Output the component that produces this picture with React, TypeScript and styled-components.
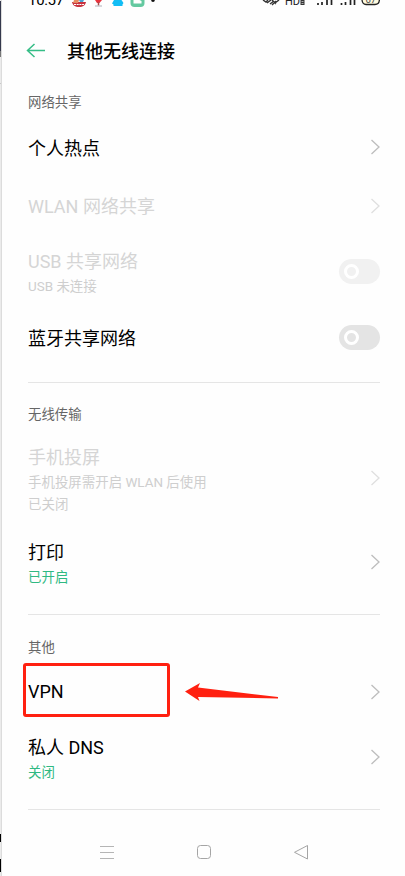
import React from 'react';
import styled, { createGlobalStyle } from 'styled-components';

const GlobalStyle = createGlobalStyle`
  * { box-sizing: border-box; }
  body {
    margin: 0;
    background: #fefefe;
    font-family: Roboto, "Noto Sans CJK SC", sans-serif;
    overflow: hidden;
  }
  svg { display: block; flex: none; }
`;

const Page = styled.div`
  display: flex;
  width: 405px;
  height: 876px;
  overflow: hidden;
`;

const WindowEdge = styled.div`
  display: flex;
  flex-direction: column;
  flex: none;
  width: 2px;
  border-right: 1px solid #dcdcdc;
  background: #ebebeb;
`;

const EdgeMark = styled.div<{ $top: number; $height: number; $color: string }>`
  flex: none;
  margin-top: ${p => p.$top}px;
  height: ${p => p.$height}px;
  background: ${p => p.$color};
`;

const Screen = styled.main`
  flex: 1;
  display: flex;
  flex-direction: column;
  padding: 0 25px 0 26px;
`;

const StatusBar = styled.div`
  display: flex;
  flex: none;
  align-items: flex-start;
  justify-content: space-between;
  height: 20px;
  overflow: hidden;
`;

const StatusLeft = styled.div`
  display: flex;
`;

const Clock = styled.span`
  width: 42px;
  margin-top: -10px;
  font-size: 15px;
  line-height: 21px;
  letter-spacing: -0.3px;
  color: #000;
`;

const Header = styled.header`
  display: flex;
  flex: none;
  align-items: center;
  height: 62px;
  gap: 20px;
`;

const BackIcon = styled.svg`
  margin-left: -2px;
`;

const PageTitle = styled.h1`
  margin: 2px 0 0 1px;
  font-size: 18px;
  line-height: 26px;
  font-weight: 500;
  color: #000;
`;

const SectionLabel = styled.h2<{ $height: number; $gap?: number }>`
  flex: none;
  margin: ${p => p.$gap ?? 0}px 0 0;
  height: ${p => p.$height}px;
  padding-top: 1px;
  line-height: ${p => p.$height}px;
  font-size: 13.4px;
  font-weight: 400;
  color: #666;
`;

const SettingRow = styled.div<{ $height: number }>`
  display: flex;
  flex: none;
  align-items: center;
  justify-content: space-between;
  height: ${p => p.$height}px;
`;

const RowText = styled.div<{ $nudge?: number }>`
  display: flex;
  flex-direction: column;
  margin-top: ${p => p.$nudge ?? 2}px;
`;

const RowTitle = styled.span<{ $disabled?: boolean }>`
  font-size: 18px;
  line-height: 28px;
  color: ${p => (p.$disabled ? '#d5d5d5' : '#000')};
`;

const RowNote = styled.span<{ $active?: boolean }>`
  font-size: 13.45px;
  line-height: 22px;
  color: ${p => (p.$active ? '#2fb982' : '#cecece')};
`;

const Divider = styled.hr<{ $gap: number }>`
  flex: none;
  width: 100%;
  height: 1px;
  margin: ${p => p.$gap}px 0 0;
  border: 0;
  background: #e5e5e5;
`;

const Toggle = styled.span<{ $disabled?: boolean }>`
  display: flex;
  align-items: center;
  width: 41px;
  height: 25px;
  padding-left: 5px;
  border-radius: 13px;
  background: ${p => (p.$disabled ? '#f1f1f1' : '#e4e4e4')};
`;

const Knob = styled.span`
  width: 15px;
  height: 15px;
  border: 3px solid #fff;
  border-radius: 50%;
`;

const HighlightedText = styled(RowText)`
  position: relative;
`;

const Highlight = styled.span`
  position: absolute;
  left: -5px;
  top: -15px;
  width: 147px;
  height: 54px;
  border: 3px solid #ff2010;
  border-radius: 3px;
`;

const Pointer = styled.svg`
  position: absolute;
  left: 156px;
  top: 5px;
`;

const NavBar = styled.nav`
  display: flex;
  flex: none;
  align-items: center;
  justify-content: space-between;
  height: 20px;
  margin: 32px 71px 0 71px;
`;

function Chevron({ disabled }: { disabled?: boolean }) {
  return (
    <svg width="10" height="16" viewBox="0 0 10 16" fill="none" stroke={disabled ? '#dfdfdf' : '#bdbdbd'} strokeWidth="1.3">
      <path d="M1.5 1L9 8L1.5 15" />
    </svg>
  );
}

function Switch({ disabled }: { disabled?: boolean }) {
  return (
    <Toggle $disabled={disabled}>
      <Knob />
    </Toggle>
  );
}

function NotificationIcons() {
  return (
    <svg width="90" height="9" viewBox="0 0 90 9">
      <path d="M2 2H16C15.500 5 13 7 9 7S2.500 5 2 2Z" fill="#c8323e" />
      <path d="M4 0H9L8 3H3Z" fill="#e68b60" />
      <path d="M9 0H14L13 2H10Z" fill="#4ba3d2" />
      <path d="M4 4.500H14" stroke="#fff" strokeWidth="1" strokeDasharray="2 .7" />
      <path d="M25 0H32L29.500 3H27Z" fill="#e9323d" />
      <path d="M28.500 2V6" stroke="#a84a4a" strokeWidth="1.500" />
      <path d="M25 6H32" stroke="#c9c9cf" strokeWidth="1.500" />
      <path d="M44 0H51.500L53.500 3L52.500 4.500V6H43.500V4.500L42 3.500Z" fill="#12bdf5" />
      <path d="M60.500 0H74.500V3Q74.500 7 70.500 7H64.500Q60.500 7 60.500 3Z" fill="#64c9a0" />
      <path d="M63.500 0H69.500L71.500 1V3.500H63.500Z" fill="#fff" />
      <circle cx="83" cy="0.300" r="1.800" fill="#111" />
    </svg>
  );
}

function SystemIcons() {
  return (
    <svg width="118" height="9" viewBox="0 0 118 9">
      <path d="M1 0L4 2L6 0M5 3L9 0M8 4L12 1M10 5L14 1M13 3L17 0M10 0L14 4" fill="none" stroke="#333" strokeWidth="1.400" />
      <text x="23" y="5" fontFamily="Roboto" fontSize="11" fill="#222">HD</text>
      <rect x="38.500" y="0" width="4" height="5" fill="#333" />
      <path d="M39.500 1.500H41.500M39.500 3.500H41.500" stroke="#fff" strokeWidth=".6" />
      <path d="M56 3V5M60 2V5M65 0V5M69.500 0V5M79.500 3V5M83.500 2V5M88.500 0V5M92.500 0V5" stroke="#222" strokeWidth="1.700" />
      <path d="M100 0Q100.500 4.500 104 4.500H113Q117 4.500 117.400 0" fill="#fffbe0" stroke="#222" strokeWidth="1.300" />
      <text x="103.500" y="3" fontFamily="Roboto" fontSize="9.500" fill="#444">67</text>
    </svg>
  );
}

export default function App() {
  return (
    <>
      <GlobalStyle />
      <Page>
        <WindowEdge>
          <EdgeMark $top={1} $height={50} $color="#34384c" />
          <EdgeMark $top={0} $height={6} $color="#777" />
          <EdgeMark $top={26} $height={1} $color="#c8c8c8" />
          <EdgeMark $top={750} $height={8} $color="#000" />
          <EdgeMark $top={17} $height={13} $color="#000" />
        </WindowEdge>
        <Screen>
          <StatusBar>
            <StatusLeft>
              <Clock>10:57</Clock>
              <NotificationIcons />
            </StatusLeft>
            <SystemIcons />
          </StatusBar>

          <Header>
            <BackIcon width="20" height="16" viewBox="0 0 20 16" fill="none" stroke="#35bd86" strokeWidth="1.500">
              <path d="M19 7.500H1.500M8.500 1L1.500 7.500L8.500 14" />
            </BackIcon>
            <PageTitle>其他无线连接</PageTitle>
          </Header>

          <SectionLabel $height={40}>网络共享</SectionLabel>
          <SettingRow $height={50}>
            <RowText $nudge={3}><RowTitle>个人热点</RowTitle></RowText>
            <Chevron />
          </SettingRow>
          <SettingRow $height={68}>
            <RowText $nudge={1}><RowTitle $disabled>WLAN 网络共享</RowTitle></RowText>
            <Chevron disabled />
          </SettingRow>
          <SettingRow $height={62}>
            <RowText $nudge={4}>
              <RowTitle $disabled>USB 共享网络</RowTitle>
              <RowNote>USB 未连接</RowNote>
            </RowText>
            <Switch disabled />
          </SettingRow>
          <SettingRow $height={70}>
            <RowText $nudge={3}><RowTitle>蓝牙共享网络</RowTitle></RowText>
            <Switch />
          </SettingRow>
          <Divider $gap={10} />

          <SectionLabel $height={62}>无线传输</SectionLabel>
          <SettingRow $height={66}>
            <RowText $nudge={3}>
              <RowTitle $disabled>手机投屏</RowTitle>
              <RowNote>手机投屏需开启 WLAN 后使用</RowNote>
              <RowNote>已关闭</RowNote>
            </RowText>
            <Chevron disabled />
          </SettingRow>
          <SettingRow $height={102}>
            <RowText $nudge={4}>
              <RowTitle>打印</RowTitle>
              <RowNote $active>已开启</RowNote>
            </RowText>
            <Chevron />
          </SettingRow>
          <Divider $gap={1} />

          <SectionLabel $height={54} $gap={5}>其他</SectionLabel>
          <SettingRow $height={36}>
            <HighlightedText $nudge={0}>
              <RowTitle>VPN</RowTitle>
              <Highlight />
              <Pointer width="96" height="20" viewBox="0 0 96 20">
                <path d="M1 8.500L16 0L14 4.500L94 14V15.500L14 14L15.500 18Z" fill="#ff2010" />
              </Pointer>
            </HighlightedText>
            <Chevron />
          </SettingRow>
          <SettingRow $height={94}>
            <RowText $nudge={4}>
              <RowTitle>私人 DNS</RowTitle>
              <RowNote $active>关闭</RowNote>
            </RowText>
            <Chevron />
          </SettingRow>
          <Divider $gap={5} />

          <NavBar>
            <svg width="16" height="16" viewBox="0 0 16 16" stroke="#b5b5b5">
              <path d="M1 2.500H15M1 8.500H15M1 14.500H15" />
            </svg>
            <svg width="16" height="16" viewBox="0 0 16 16" fill="none" stroke="#a5a5a5">
              <rect x="1.500" y="1.500" width="13" height="13" rx="3" />
            </svg>
            <svg width="16" height="16" viewBox="0 0 16 16" fill="none" stroke="#a5a5a5" strokeLinejoin="round">
              <path d="M14.500 1.500V15L1.500 8.300Z" />
            </svg>
          </NavBar>
        </Screen>
      </Page>
    </>
  );
}
